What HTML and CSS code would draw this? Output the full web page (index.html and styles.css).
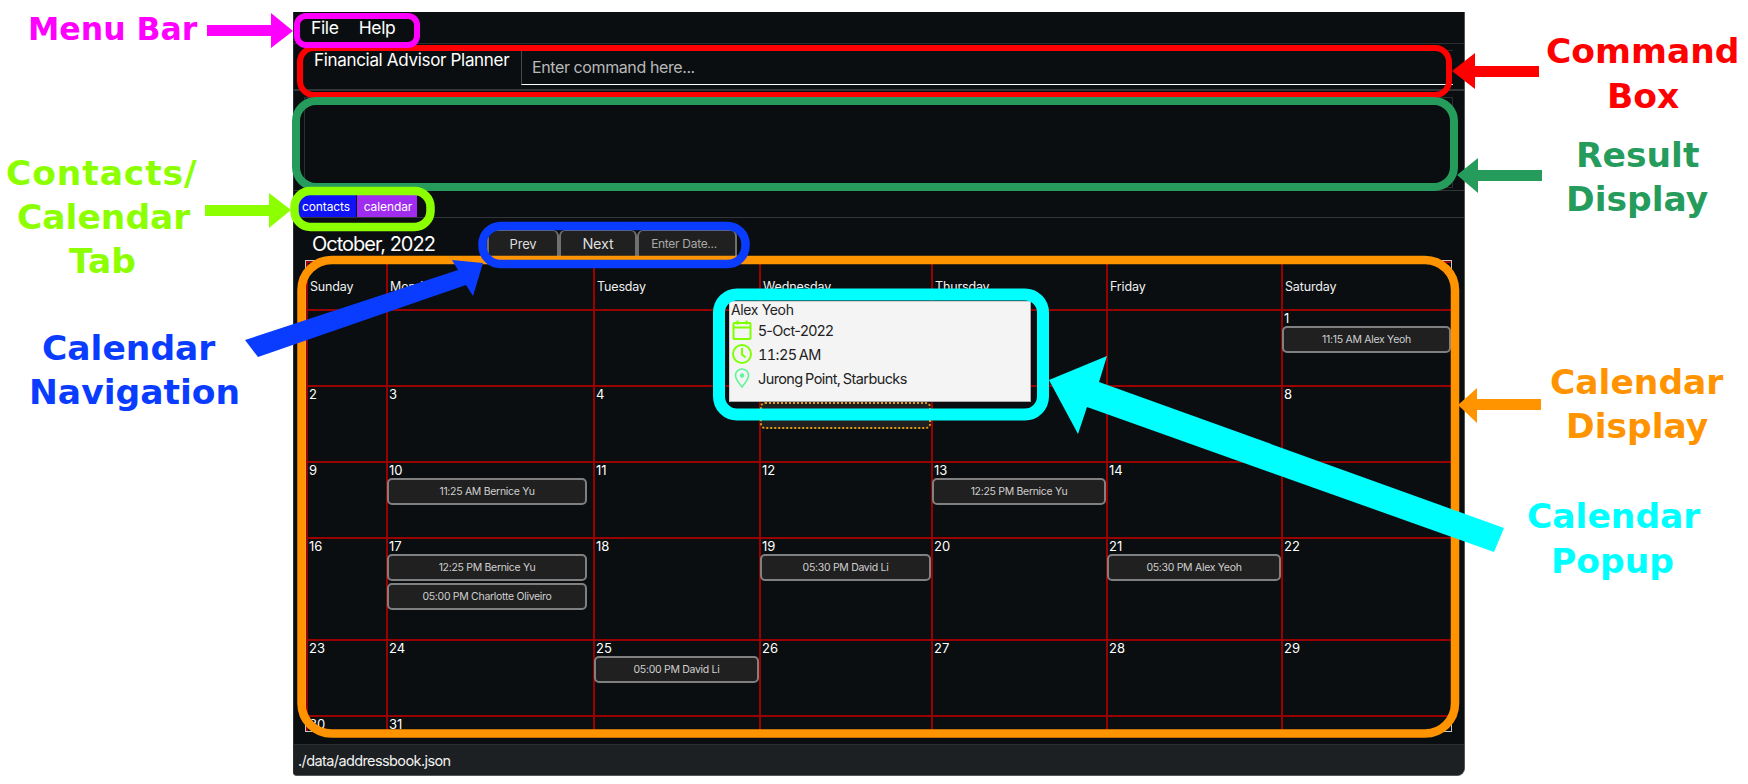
FILE: index.html
```html
<!DOCTYPE html>
<html lang="en">
<head>
<meta charset="utf-8">
<title>Financial Advisor Planner</title>
<link rel="stylesheet" href="styles.css">
</head>
<body>
<div class="stage">
  <main class="window">
    <nav class="menubar"><span>File</span><span>Help</span></nav>
    <section class="command-row">
      <div class="app-title">Financial Advisor Planner</div>
      <div class="command-input">Enter command here...</div>
    </section>
    <section class="result-row"><div class="result-box"></div></section>
    <section class="tab-row">
      <span class="tab tab-contacts">contacts</span>
      <span class="tab tab-calendar">calendar</span>
    </section>
    <section class="calendar">
      <header class="calendar-head">
        <h1 class="month">October, 2022</h1>
        <div class="nav">
          <span class="nav-btn nav-prev">Prev</span>
          <span class="nav-btn nav-next">Next</span>
          <span class="nav-btn nav-date">Enter Date...</span>
        </div>
      </header>
      <div class="grid">
        <div class="cell head">Sunday</div><div class="cell head">Monday</div><div class="cell head">Tuesday</div><div class="cell head">Wednesday</div><div class="cell head">Thursday</div><div class="cell head">Friday</div><div class="cell head">Saturday</div>

        <div class="cell"></div><div class="cell"></div><div class="cell"></div><div class="cell"></div><div class="cell"></div><div class="cell"></div>
        <div class="cell"><span class="date">1</span><div class="chip">11:15 AM Alex Yeoh</div></div>

        <div class="cell"><span class="date">2</span></div><div class="cell"><span class="date">3</span></div><div class="cell"><span class="date">4</span></div>
        <div class="cell"><span class="date">5</span><div class="chip chip-focus">11:25 AM Alex Yeoh</div></div>
        <div class="cell"><span class="date">6</span></div><div class="cell"><span class="date">7</span></div><div class="cell"><span class="date">8</span></div>

        <div class="cell"><span class="date">9</span></div>
        <div class="cell"><span class="date">10</span><div class="chip chip-short">11:25 AM Bernice Yu</div></div>
        <div class="cell"><span class="date">11</span></div><div class="cell"><span class="date">12</span></div>
        <div class="cell"><span class="date">13</span><div class="chip">12:25 PM Bernice Yu</div></div>
        <div class="cell"><span class="date">14</span></div><div class="cell"><span class="date">15</span></div>

        <div class="cell"><span class="date">16</span></div>
        <div class="cell"><span class="date">17</span><div class="chip chip-short">12:25 PM Bernice Yu</div><div class="chip chip-short">05:00 PM Charlotte Oliveiro</div></div>
        <div class="cell"><span class="date">18</span></div>
        <div class="cell"><span class="date">19</span><div class="chip">05:30 PM David Li</div></div>
        <div class="cell"><span class="date">20</span></div>
        <div class="cell"><span class="date">21</span><div class="chip">05:30 PM Alex Yeoh</div></div>
        <div class="cell"><span class="date">22</span></div>

        <div class="cell"><span class="date">23</span></div><div class="cell"><span class="date">24</span></div>
        <div class="cell"><span class="date">25</span><div class="chip">05:00 PM David Li</div></div>
        <div class="cell"><span class="date">26</span></div><div class="cell"><span class="date">27</span></div><div class="cell"><span class="date">28</span></div><div class="cell"><span class="date">29</span></div>

        <div class="cell"><span class="date">30</span></div><div class="cell"><span class="date">31</span></div><div class="cell"></div><div class="cell"></div><div class="cell"></div><div class="cell"></div><div class="cell"></div>
      </div>
    </section>
    <footer class="statusbar">./data/addressbook.json</footer>
  </main>

  <aside class="popup">
    <div class="popup-name">Alex Yeoh</div>
    <div class="popup-row">
      <svg class="popup-icon" viewBox="0 0 20 20" fill="none" stroke="#7fff00" stroke-width="2"><rect x="1.5" y="3" width="17" height="16" rx="1"/><path d="M1.5 7.5h17M5.5 0.5v4M14.5 0.5v4"/></svg>
      <span>5-Oct-2022</span>
    </div>
    <div class="popup-row">
      <svg class="popup-icon" viewBox="0 0 20 20" fill="none" stroke="#7fff00" stroke-width="2"><circle cx="10" cy="10" r="9"/><path d="M10 4v6.5l3.6 3"/></svg>
      <span class="tabular">11:25 AM</span>
    </div>
    <div class="popup-row">
      <svg class="popup-icon" viewBox="0 0 20 20" fill="none" stroke="#5ff59a" stroke-width="1.6"><path d="M10 19C6 14 3.5 11 3.5 7.5a6.5 6.5 0 0 1 13 0C16.500 11 14 14 10 19z"/><circle cx="10" cy="7.500" r="2.200" fill="#5ff59a" stroke="none"/></svg>
      <span>Jurong Point, Starbucks</span>
    </div>
  </aside>

  <svg class="marks" width="1748" height="784" viewBox="0 0 1748 784" fill="none">
    <rect x="300" y="48" width="1149" height="47" rx="14" stroke="#ff0000" stroke-width="6"/>
    <rect x="296" y="101" width="1158" height="86" rx="20" stroke="#259c5c" stroke-width="8"/>
    <rect x="301.500" y="260" width="1153.500" height="473.500" rx="30" stroke="#ff9400" stroke-width="8.500"/>
    <rect x="297" y="16" width="120" height="29" rx="9" stroke="#ff00ff" stroke-width="6"/>
    <rect x="294.500" y="191" width="136" height="36" rx="16" stroke="#8cff00" stroke-width="8.500"/>
    <rect x="482.500" y="226" width="263" height="38" rx="18" stroke="#0a3cff" stroke-width="8.500"/>
    <rect x="719" y="294.500" width="324" height="120" rx="18" stroke="#00ffff" stroke-width="12"/>

    <polygon fill="#ff00ff" points="207,25 271,25 271,13 293,31 271,48 271,36 207,36"/>
    <polygon fill="#ff0000" points="1539,66 1475,66 1475,53 1452,71 1475,89 1475,77 1539,77"/>
    <polygon fill="#259c5c" points="1542,170 1478,170 1478,158 1457,175 1478,193 1478,181 1542,181"/>
    <polygon fill="#8cff00" points="205,205 269,205 269,193 291,210 269,228 269,216 205,216"/>
    <polygon fill="#ff9400" points="1541,399 1477,399 1477,388 1458,405 1477,423 1477,410 1541,410"/>
    <polygon fill="#0a3cff" points="245,340 458,270 452,260 483,263 473,296 466,285 258,357"/>
    <polygon fill="#00ffff" points="1504,528 1099,382 1107,356 1049,380 1078,434 1087,407 1494,552"/>
  </svg>

  <div class="label magenta l-menu">Menu Bar</div>
  <div class="label red l-command">Command</div>
  <div class="label red l-box">Box</div>
  <div class="label green l-result">Result</div>
  <div class="label green l-display">Display</div>
  <div class="label lime l-contacts">Contacts/</div>
  <div class="label lime l-calendar">Calendar</div>
  <div class="label lime l-tab">Tab</div>
  <div class="label blue l-calnav">Calendar</div>
  <div class="label blue l-nav">Navigation</div>
  <div class="label orange l-caldisp">Calendar</div>
  <div class="label orange l-disp">Display</div>
  <div class="label cyan l-calpop">Calendar</div>
  <div class="label cyan l-popup">Popup</div>
</div>
</body>
</html>
```
FILE: styles.css
```css
* { box-sizing: border-box; }
html, body { margin: 0; padding: 0; background: #fff; }
body { font-family: Inter, "Liberation Sans", sans-serif; overflow: hidden; }

.stage { position: relative; width: 1748px; height: 784px; padding: 12px 283px 0 293px; }

.window {
  display: flex; flex-direction: column;
  width: 1172px; height: 764px;
  background: #0a0e10; color: #fff;
  border-left: 1px solid #2d3033;
  border-right: 1px solid #555;
  border-bottom: 1px solid #555;
  border-bottom-right-radius: 8px;
  border-bottom-left-radius: 4px;
  overflow: hidden;
}

.menubar {
  display: flex; gap: 20px; align-items: center;
  height: 32px; flex: none;
  padding: 0 0 1px 17px;
  font-size: 17.500px; letter-spacing: -0.35px;
  border-bottom: 1px solid #2c2f31;
}

.command-row {
  display: flex; flex: none; height: 47px;
  padding: 6px 11px 0 20px;
  border-bottom: 2px solid #333638;
}
.app-title { width: 207px; font-size: 17px; letter-spacing: -0.32px; line-height: 20px; flex: none; }
.command-input {
  flex: 1; height: 35px;
  padding: 0 10px;
  font-size: 16px; letter-spacing: -0.4px; line-height: 33px; color: #b9b9b9;
  border-top: 1px solid #2c2f31;
  border-left: 1px solid #45484a;
  border-bottom: 1px solid #fff;
}

.result-row { flex: none; height: 100px; padding: 6px 11px 2px 10px; border-bottom: 1px solid #333638; }
.result-box { height: 100%; border: 1px solid #2c2f31; }

.tab-row {
  display: flex; gap: 1px; flex: none; height: 27px;
  padding: 4px 0 1px 5px;
  border-bottom: 1px solid #333638;
}
.tab { display: flex; align-items: center; justify-content: center; height: 22px; font-size: 12px; letter-spacing: -0.1px; }
.tab-contacts { width: 57px; padding-right: 3px; background: #0f13f5; }
.tab-calendar { width: 60px; padding-left: 2px; background: #a02cf0; }

.calendar { flex: 1; display: flex; flex-direction: column; padding: 0 0 0 11px; min-height: 0; }
.calendar-head { display: flex; flex: none; height: 42px; padding-top: 12px; }
.month { margin: 0; width: 182px; padding-left: 7px; font-size: 20px; letter-spacing: -1px; font-weight: 400; line-height: 28px; }
.nav { display: flex; height: 26px; }
.nav-btn {
  display: flex; align-items: center; justify-content: center;
  height: 26px; font-size: 13px; letter-spacing: -0.2px;
  background: #202020; color: #ddd;
  border: solid #707070; border-width: 1px 2px 0;
  border-radius: 6px 6px 0 0;
}
.nav-prev { width: 72px; }
.nav-next { width: 78px; font-size: 14.500px; }
.nav-date { width: 100px; padding-right: 6px; font-size: 12px; letter-spacing: -0.3px; color: #a8a8a8; }

.grid {
  display: grid; flex: none;
  width: 1147px; height: 472px;
  grid-template-columns: 80px 207px 166px 172px 175px 175px 170px;
  grid-template-rows: 48px 76px 76px 76px 102px 76px 16px;
  border: 1px solid #c8c8c8;
  overflow: hidden;
}
.cell {
  display: flex; flex-direction: column; gap: 2px; min-width: 0; min-height: 0;
  background: #0a0e10;
  border-top: 2px solid #990000;
  border-left: 2px solid #990000;
}
.cell.head {
  justify-content: flex-end; padding: 0 0 15px 2px;
  font-size: 12.500px; letter-spacing: -0.15px; color: #f0f0f0;
}
.date { height: 15px; font-size: 13px; line-height: 15px; color: #fff; flex: none; margin-bottom: -2px; padding-left: 1px; }
.chip {
  display: flex; align-items: center; justify-content: center; flex: none;
  height: 27px; margin-left: -1px;
  font-size: 10.500px; letter-spacing: -0.3px; color: #cfcfcf;
  background: #202020;
  border: 2px solid #808080; border-radius: 5px;
}
.chip-short { margin-right: 6px; }
.chip-focus { border: 2px dotted #e09a10; }

.statusbar {
  flex: none; height: 31px; padding: 0 0 0 4px;
  font-size: 14.500px; letter-spacing: -0.6px; line-height: 31px; color: #f2f2f2;
  background: #1d2023;
  border-top: 1px solid #2c2f31;
}

.popup {
  position: absolute; left: 729px; top: 301px;
  width: 302px; height: 101px;
  padding: 0 0 0 1px;
  background: #f4f4f4; color: #222;
  border: 1px solid #cfcfcf;
  border-right-color: #aaa; border-bottom-color: #aaa;
  display: flex; flex-direction: column;
  font-size: 14.500px; letter-spacing: -0.6px; word-spacing: -1px;
}
.popup-name { height: 16px; line-height: 16px; font-size: 14px; letter-spacing: -0.35px; word-spacing: 0; }
.popup-row { display: flex; align-items: center; gap: 6px; height: 24px; padding-left: 1px; }
.popup-icon { width: 20px; height: 20px; flex: none; }
.tabular { font-variant-numeric: tabular-nums; }

.marks { position: absolute; left: 0; top: 0; pointer-events: none; }

.label {
  position: absolute; white-space: nowrap;
  font-family: "DejaVu Sans", sans-serif; font-weight: 700;
  font-size: 34.500px; line-height: 44px;
}
.magenta { color: #ff00ff; }
.red { color: #ff0000; }
.green { color: #259c5c; }
.lime { color: #8cff00; }
.blue { color: #0a3cff; }
.orange { color: #ff9400; }
.cyan { color: #00ffff; }

.l-menu { left: 28px; top: 7px; font-size: 31.500px; }
.l-command { left: 1546px; top: 29px; }
.l-box { left: 1607px; top: 74px; }
.l-result { left: 1576px; top: 133px; }
.l-display { left: 1566px; top: 177px; }
.l-contacts { left: 6px; top: 151px; letter-spacing: 0.9px; }
.l-calendar { left: 17px; top: 195px; }
.l-tab { left: 69px; top: 239px; }
.l-calnav { left: 42px; top: 326px; }
.l-nav { left: 29px; top: 370px; }
.l-caldisp { left: 1550px; top: 360px; }
.l-disp { left: 1566px; top: 404px; }
.l-calpop { left: 1527px; top: 494px; }
.l-popup { left: 1551px; top: 539px; }
```
